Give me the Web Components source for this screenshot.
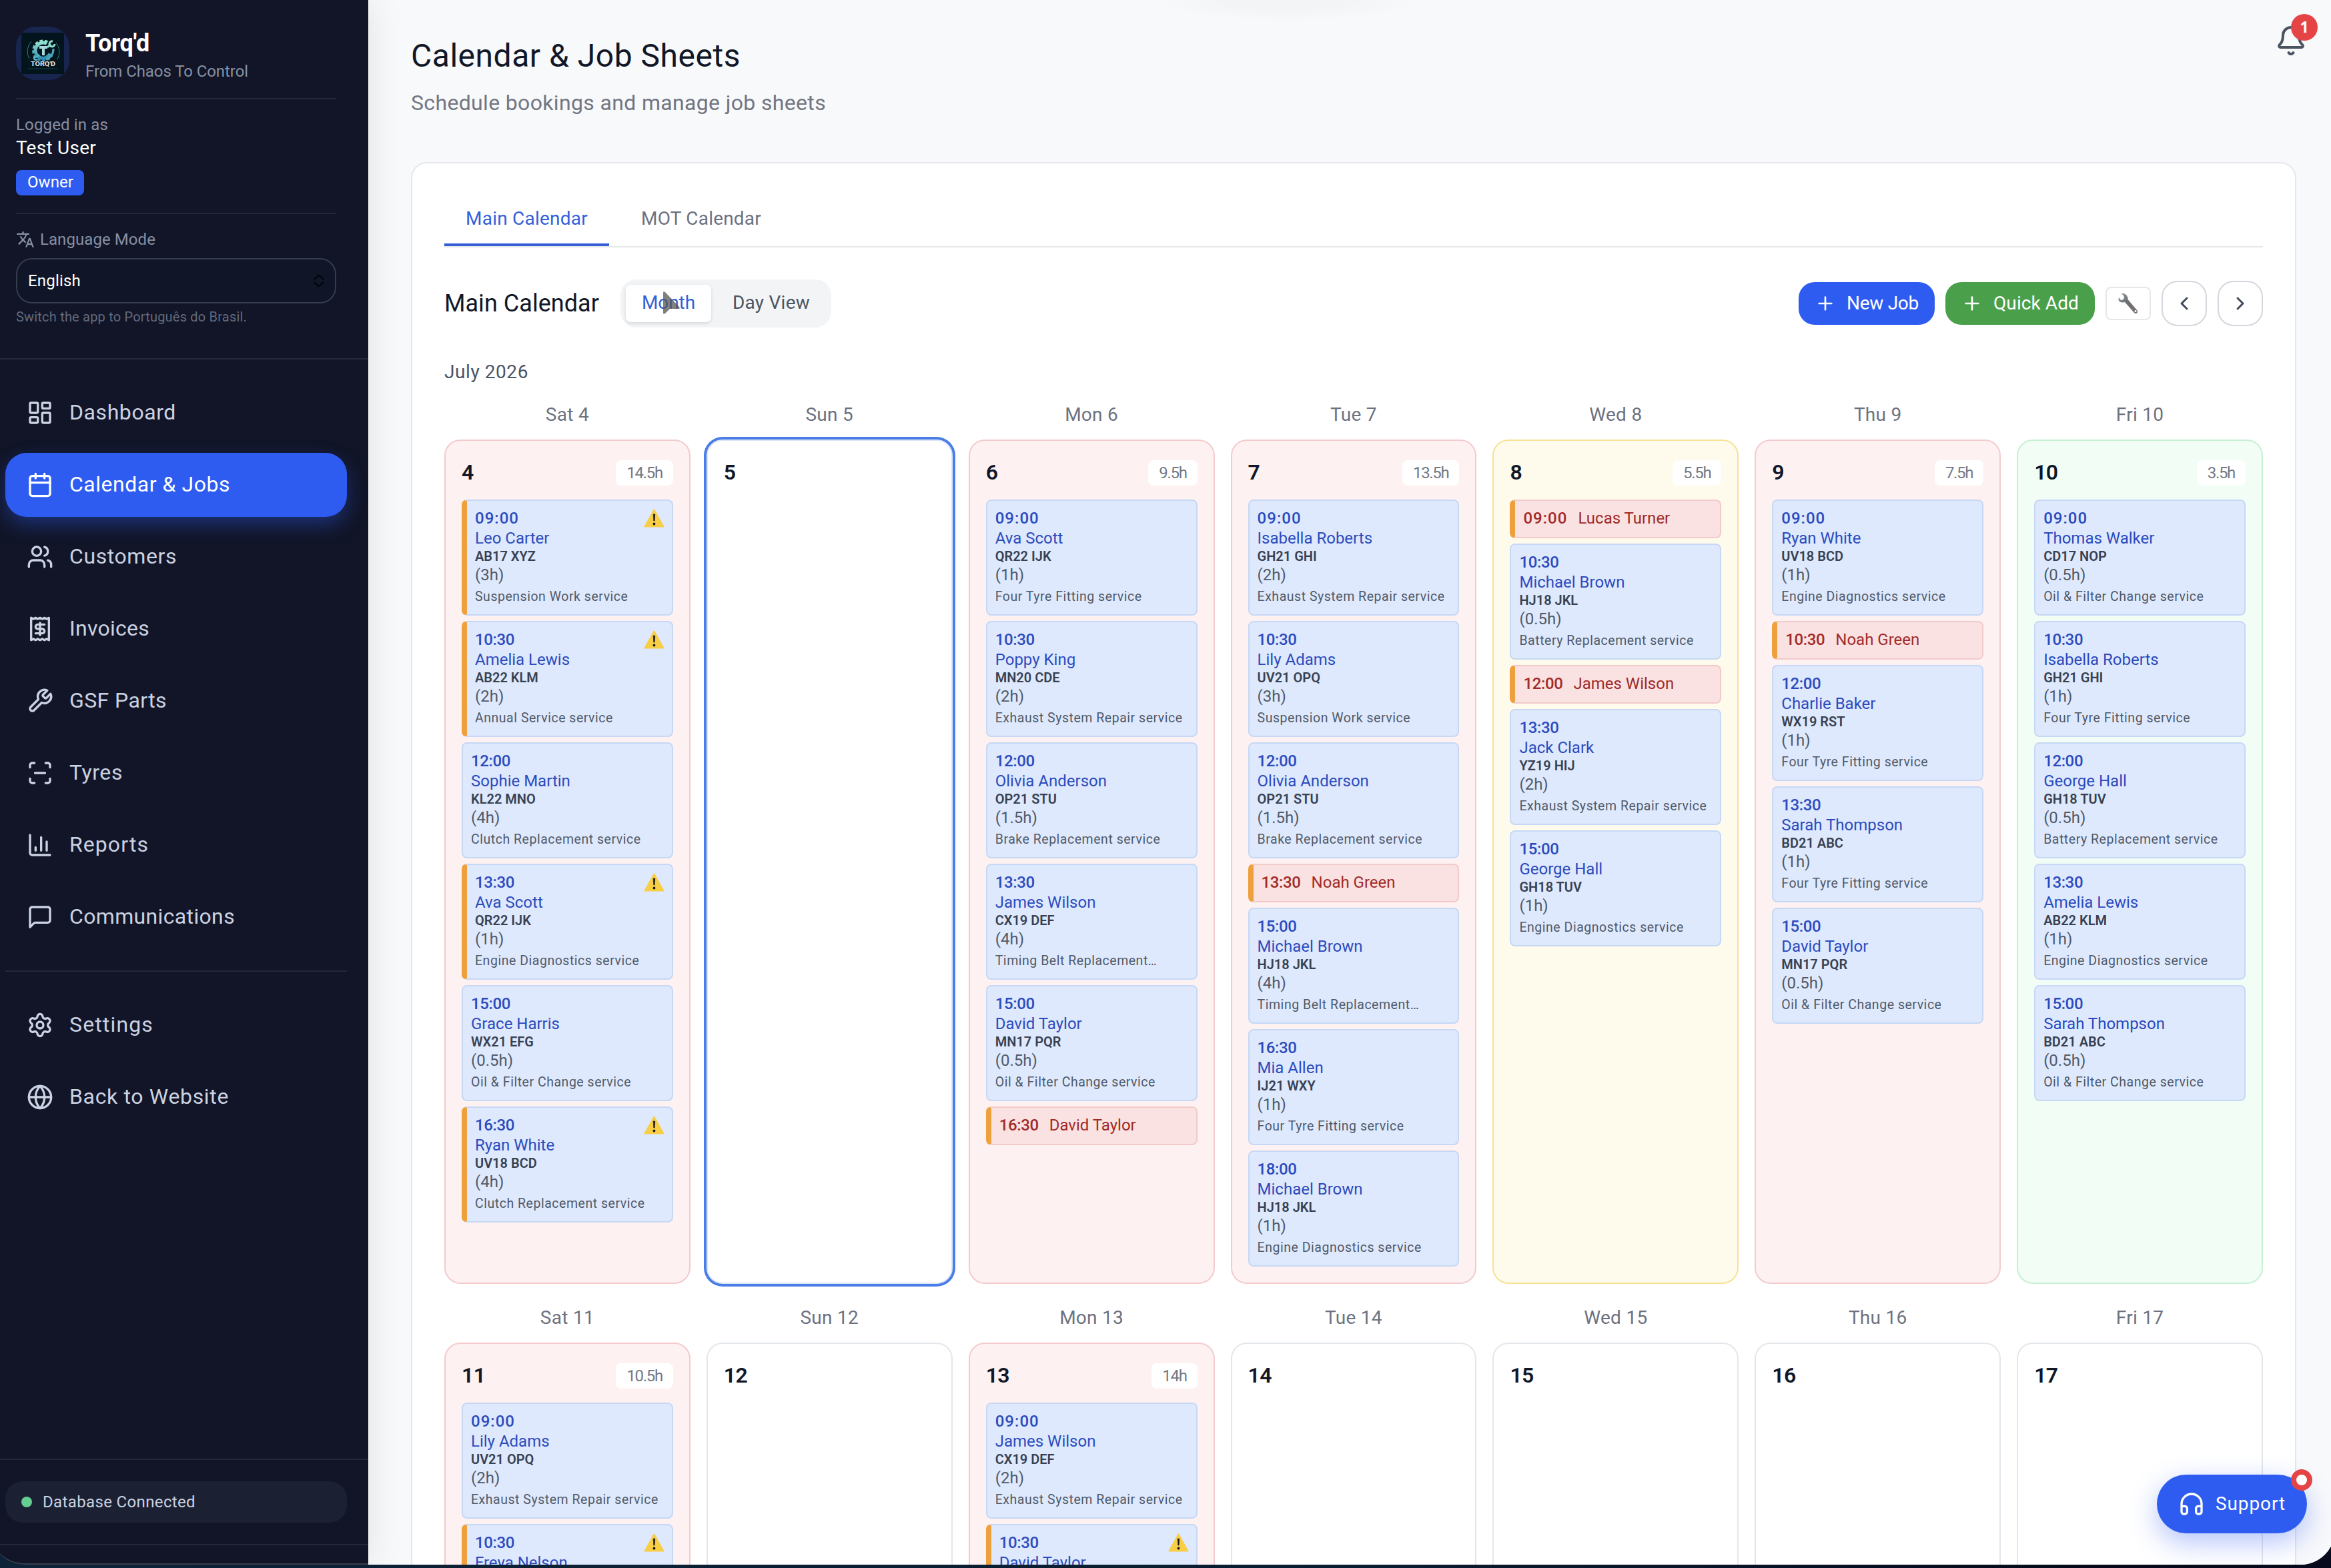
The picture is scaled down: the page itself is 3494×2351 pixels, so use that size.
<!DOCTYPE html>
<html lang="en">
<head>
<meta charset="utf-8">
<title>Torq'd - Calendar &amp; Job Sheets</title>
<style>
  html, body {
    margin: 0;
    height: 2351px;
    overflow: hidden;
    background: linear-gradient(90deg, #0c2338, #0a1c30 60%, #060a1c 90%);
    font-family: Roboto, "Liberation Sans", sans-serif;
    color: #111727;
  }
</style>
</head>
<body>
<app-window>
  <side-bar slot="side"></side-bar>
  <calendar-page></calendar-page>
</app-window>

<script>
const ICONS = {
  dashboard: '<rect width="7" height="9" x="3" y="3" rx="1"/><rect width="7" height="5" x="14" y="3" rx="1"/><rect width="7" height="9" x="14" y="12" rx="1"/><rect width="7" height="5" x="3" y="16" rx="1"/>',
  calendar: '<path d="M8 2v4M16 2v4"/><rect width="18" height="18" x="3" y="4" rx="2"/><path d="M3 10h18"/>',
  users: '<path d="M16 21v-2a4 4 0 0 0-4-4H6a4 4 0 0 0-4 4v2"/><circle cx="9" cy="7" r="4"/><path d="M22 21v-2a4 4 0 0 0-3-3.87M16 3.13a4 4 0 0 1 0 7.75"/>',
  receipt: '<path d="M4 2v20l2-1 2 1 2-1 2 1 2-1 2 1 2-1 2 1V2l-2 1-2-1-2 1-2-1-2 1-2-1-2 1Z"/><path d="M16 8h-6a2 2 0 1 0 0 4h4a2 2 0 1 1 0 4H8M12 17.5v-11"/>',
  wrench: '<path d="M14.7 6.3a1 1 0 0 0 0 1.4l1.6 1.6a1 1 0 0 0 1.4 0l3.77-3.77a6 6 0 0 1-7.94 7.94l-6.91 6.91a2.12 2.12 0 0 1-3-3l6.91-6.91a6 6 0 0 1 7.94-7.94l-3.76 3.76z"/>',
  scan: '<path d="M3 7V5a2 2 0 0 1 2-2h2M17 3h2a2 2 0 0 1 2 2v2M21 17v2a2 2 0 0 1-2 2h-2M7 21H5a2 2 0 0 1-2-2v-2M7.5 12h9"/>',
  chart: '<path d="M3 3v16a2 2 0 0 0 2 2h16M18 17V9M13 17V5M8 17v-3"/>',
  message: '<path d="M21 15a2 2 0 0 1-2 2H7l-4 4V5a2 2 0 0 1 2-2h14a2 2 0 0 1 2 2z"/>',
  settings: '<path d="M9.671 4.136a2.34 2.34 0 0 1 4.659 0 2.34 2.34 0 0 0 3.319 1.915 2.34 2.34 0 0 1 2.33 4.033 2.34 2.34 0 0 0 0 3.831 2.34 2.34 0 0 1-2.33 4.033 2.34 2.34 0 0 0-3.319 1.915 2.34 2.34 0 0 1-4.659 0 2.34 2.34 0 0 0-3.32-1.915 2.34 2.34 0 0 1-2.33-4.033 2.34 2.34 0 0 0 0-3.831A2.34 2.34 0 0 1 6.35 6.051a2.34 2.34 0 0 0 3.319-1.915"/><circle cx="12" cy="12" r="3"/>',
  globe: '<circle cx="12" cy="12" r="10"/><path d="M12 2a14.5 14.5 0 0 0 0 20 14.5 14.5 0 0 0 0-20M2 12h20"/>',
  plus: '<path d="M5 12h14M12 5v14"/>',
  left: '<path d="m15 18-6-6 6-6"/>',
  right: '<path d="m9 18 6-6-6-6"/>',
  updown: '<path d="m5 9 7-6 7 6M5 15l7 6 7-6"/>',
  bell: '<path d="M10.268 21a2 2 0 0 0 3.464 0M3.262 15.326A1 1 0 0 0 4 17h16a1 1 0 0 0 .74-1.673C19.41 13.956 18 12.499 18 8A6 6 0 0 0 6 8c0 4.499-1.411 5.956-2.738 7.326"/>',
  headphones: '<path d="M3 14h3a2 2 0 0 1 2 2v3a2 2 0 0 1-2 2H5a2 2 0 0 1-2-2v-7a9 9 0 0 1 18 0v7a2 2 0 0 1-2 2h-1a2 2 0 0 1-2-2v-3a2 2 0 0 1 2-2h3"/>',
  translate: '<path fill="currentColor" stroke="none" d="m12.87 15.07-2.54-2.51.03-.03A17.52 17.52 0 0 0 14.07 6H17V4h-7V2H8v2H1v2h11.17C11.5 7.92 10.44 9.75 9 11.35 8.07 10.32 7.3 9.19 6.69 8h-2c.73 1.63 1.73 3.17 2.98 4.56l-5.09 5.02L4 19l5-5 3.11 3.11.76-2.04zM18.5 10h-2L12 22h2l1.12-3h4.75L21 22h2l-4.5-12zm-2.62 7 1.62-4.33L19.12 17h-3.24z"/>'
};

class AppIcon extends HTMLElement {
  connectedCallback() {
    const size = this.getAttribute('size') || 40;
    this.attachShadow({mode: 'open'}).innerHTML = `
      <style>
        :host { display: block; flex: none; width: ${size}px; height: ${size}px; }
        svg { display: block; width: 100%; height: 100%; }
      </style>
      <svg viewBox="0 0 24 24" fill="none" stroke="currentColor" stroke-width="${this.getAttribute('stroke') || 2}"
        stroke-linecap="round" stroke-linejoin="round">${ICONS[this.getAttribute('name')]}</svg>
    `;
  }
}

// One line of text, tracked out or in until it is `width` pixels wide
class FitText extends HTMLElement {
  connectedCallback() {
    this.attachShadow({mode: 'open'}).innerHTML = `
      <style>
        :host { display: block; white-space: nowrap; }
        span { display: inline-block; letter-spacing: 0; }
      </style>
      <span><slot></slot></span>
    `;
    const span = this.shadowRoot.querySelector('span');
    const width = Number(this.getAttribute('width'));
    const extra = width - span.getBoundingClientRect().width;
    span.style.letterSpacing = `${extra / this.textContent.length}px`;
  }
}

class AppWindow extends HTMLElement {
  constructor() {
    super();
    this.attachShadow({mode: 'open'}).innerHTML = `
      <style>
        :host {
          display: flex;
          box-sizing: border-box;
          height: 2346px;
          margin: 0 -6px 0 -15px;
          padding: 0 6px 0 15px;
          overflow: hidden;
          border-radius: 0 0 52px 52px;
          background: linear-gradient(90deg, #111527 300px, #f8f9fb 600px);
        }
      </style>
      <slot name="side"></slot>
      <slot></slot>
    `;
  }
}

class NavItem extends HTMLElement {
  connectedCallback() {
    this.attachShadow({mode: 'open'}).innerHTML = `
      <style>
        :host {
          display: flex;
          align-items: center;
          gap: 24px;
          height: 96px;
          padding-left: 32px;
          border-radius: 32px;
          font-size: 32px;
          color: #cbd2e1;
        }
        :host([active]) {
          background: #2e5cf1;
          color: #fff;
          box-shadow: 0 12px 28px rgba(46, 92, 241, .38);
        }
        fit-text { margin-top: -3px; }
      </style>
      <app-icon name="${this.getAttribute('icon')}"></app-icon>
      <fit-text width="${this.getAttribute('width')}">${this.innerHTML}</fit-text>
    `;
  }
}

class SideBar extends HTMLElement {
  constructor() {
    super();
    this.attachShadow({mode: 'open'});
  }

  connectedCallback() {
    this.shadowRoot.innerHTML = `
      <style>
        :host {
          display: flex;
          flex-direction: column;
          flex: none;
          box-sizing: border-box;
          position: relative;
          z-index: 1;
          width: 567px;
          margin-left: -15px;
          padding-left: 15px;
          height: 2346px;
          background: #111527;
          border-bottom: 2px solid #3a4050;
          border-radius: 0 0 0 52px;
          box-shadow: 0 0 56px rgba(0, 0, 0, .1);
        }
        .top {
          height: 497px;
          padding: 40px 48px 0 24px;
          border-bottom: 2px solid #22273a;
        }
        .brand {
          display: flex;
          height: 107px;
          gap: 25px;
          border-bottom: 2px solid #22273a;
        }
        .logo {
          display: flex;
          align-items: center;
          justify-content: center;
          width: 80px;
          height: 80px;
          border-radius: 30px;
          background: #18254f;
        }
        .name { margin: 5px 0 0 -1px; font-size: 36px; line-height: 40px; font-weight: 700; color: #fff; }
        .muted { font-size: 24px; line-height: 32px; color: #8790a3; }
        .brand .muted { margin: 6px 0 0 -1px; }
        .user { height: 148px; padding-top: 22px; border-bottom: 2px solid #22273a; }
        .user .who { font-size: 28px; line-height: 38px; color: #fff; }
        .role {
          display: inline-block;
          margin-top: 14px;
          height: 38px;
          padding: 0 16px 0 17px;
          border-radius: 8px;
          background: #2e5cf1;
          color: #fff;
          font-size: 24px;
          line-height: 37px;
        }
        .lang { display: flex; align-items: center; gap: 8px; margin-top: 22px; }
        .select {
          display: flex;
          align-items: center;
          justify-content: space-between;
          box-sizing: border-box;
          height: 68px;
          margin-top: 12px;
          padding: 0 13px 0 16px;
          border: 2px solid #353c4c;
          border-radius: 24px;
          background: #101628;
          color: #fff;
          font-size: 24px;
        }
        .select app-icon { color: #04060c; }
        .hint { margin-top: 5px; font-size: 20px; line-height: 30px; color: #626a7d; }
        nav {
          display: flex;
          flex-direction: column;
          gap: 12px;
          padding: 32px 32px 0 8px;
        }
        hr { width: 100%; height: 2px; margin: 20px 0; border: 0; background: #22273a; }
        .status {
          box-sizing: border-box;
          height: 130px;
          margin: auto 0 27px;
          padding: 32px 32px 0 8px;
          border: solid #22273a;
          border-width: 2px 0;
        }
        .status div {
          display: flex;
          align-items: center;
          gap: 16px;
          height: 62px;
          padding-left: 24px;
          border-radius: 26px;
          background: #1b2032;
          color: #cbd2e1;
          font-size: 24px;
        }
        i { width: 16px; height: 16px; border-radius: 50%; background: #63cd92; }
      </style>
      <div class="top">
        <div class="brand">
          <div class="logo">
            <svg width="64" height="62" viewBox="0 0 64 62">
              <defs><linearGradient id="g" x1="0" y1="0" x2="0" y2="1"><stop offset="0" stop-color="#8fe0cf"/><stop offset="1" stop-color="#2f8fb0"/></linearGradient></defs>
              <rect width="64" height="62" fill="#03141c"/>
              <path d="M15 13a22 22 0 0 0-3 26M52 15a22 22 0 0 1 2 25" fill="none" stroke="#2d7f86" stroke-width="1"/>
              <path d="M39 14.500a14 14 0 1 0 6 19" fill="none" stroke="url(#g)" stroke-width="5" stroke-dasharray="4.500 2.500"/>
              <path d="M38 16.500a11.500 11.500 0 1 0 5 15" fill="none" stroke="url(#g)" stroke-width="5"/>
              <path d="M48 24a16 16 0 0 1-11 16" fill="none" stroke="#4aa6bd" stroke-width="3"/>
              <path d="M39 22l5-5M47 13a4 4 0 1 0 3 4" fill="none" stroke="#8fe0cf" stroke-width="3"/>
              <path d="M27 33l-5 4M21 35a3 3 0 1 0 3 5" fill="none" stroke="#5cb4c4" stroke-width="2.500"/>
              <path d="M27 22h12M33 22v12" stroke="#a5d9de" stroke-width="4"/>
              <text x="32.500" y="50" text-anchor="middle" font-size="9" font-weight="700" fill="#e6eef0" textLength="37" lengthAdjust="spacingAndGlyphs">TORQ'D</text>
              <path d="M10 54h43" stroke="#23505a" stroke-dasharray="2 1"/>
            </svg>
          </div>
          <div>
            <fit-text class="name" width="96">Torq'd</fit-text>
            <fit-text class="muted" width="244">From Chaos To Control</fit-text>
          </div>
        </div>
        <div class="user">
          <fit-text class="muted" width="138">Logged in as</fit-text>
          <fit-text class="who" width="120">Test User</fit-text>
          <fit-text class="role" width="69">Owner</fit-text>
        </div>
        <div class="lang muted">
          <app-icon name="translate" size="28"></app-icon>
          <fit-text width="173">Language Mode</fit-text>
        </div>
        <div class="select"><fit-text width="79">English</fit-text><app-icon name="updown" size="22" stroke="2.800"></app-icon></div>
        <fit-text class="hint" width="346">Switch the app to Português do Brasil.</fit-text>
      </div>
      <nav>
        <nav-item icon="dashboard" width="160">Dashboard</nav-item>
        <nav-item icon="calendar" width="241" active>Calendar &amp; Jobs</nav-item>
        <nav-item icon="users" width="161">Customers</nav-item>
        <nav-item icon="receipt" width="120">Invoices</nav-item>
        <nav-item icon="wrench" width="146">GSF Parts</nav-item>
        <nav-item icon="scan" width="80">Tyres</nav-item>
        <nav-item icon="chart" width="119">Reports</nav-item>
        <nav-item icon="message" width="248">Communications</nav-item>
        <hr>
        <nav-item icon="settings" width="126">Settings</nav-item>
        <nav-item icon="globe" width="239">Back to Website</nav-item>
      </nav>
      <div class="status"><div><i></i><fit-text width="229">Database Connected</fit-text></div></div>
    `;
  }
}

class JobCard extends HTMLElement {
  set job(job) {
    const [time, name, plate, hours, service, late] = job;
    this.attachShadow({mode: 'open'}).innerHTML = `
      <style>
        :host {
          display: block;
          flex: none;
          box-sizing: border-box;
          position: relative;
          height: 174px;
          padding: 11px 12px 0;
          border: 2px solid #c6d8f5;
          border-radius: 8px;
          background: #dfe9fd;
          color: #2b4bbd;
          font-size: 24px;
          line-height: 30px;
          white-space: nowrap;
        }
        :host(.late) { border-left: 8px solid #eea03c; }
        :host(.short) {
          display: flex;
          gap: 16px;
          height: 58px;
          border-color: #f3caca;
          border-left: 8px solid #eea03c;
          background: #fae2e2;
          color: #a12a28;
        }
        .time { font-weight: 500; }
        .plate { font-size: 20px; line-height: 25px; font-weight: 600; color: #374151; }
        .hours { line-height: 31px; color: #4f5a69; }
        .service { margin-top: 4px; font-size: 19.500px; line-height: 25px; letter-spacing: .027em; color: #4f5a69; }
        svg { position: absolute; top: 12px; right: 11px; }
      </style>
      <fit-text class="time" width="${time[0] === '0' ? 66 : 59}">${time}</fit-text>
      <div>${name}</div>
      ${plate ? `
        <div class="plate">${plate}</div>
        <div class="hours">(${hours})</div>
        <div class="service">${service}</div>` : ''}
      ${late ? `
        <svg width="31" height="28" viewBox="0 0 31 28">
          <path d="M15.500 1.500 29.500 26.500h-28z" fill="#f7ce46" stroke="#f7ce46" stroke-width="2" stroke-linejoin="round"/>
          <path d="M14.200 8h2.600l-.6 10h-1.400z" fill="#1d1a14" stroke="#1d1a14" stroke-width=".6"/>
          <circle cx="15.500" cy="22.500" r="1.900" fill="#1d1a14"/>
        </svg>` : ''}
    `;
    this.className = plate ? (late ? 'late' : '') : 'short';
  }
}

class DayCell extends HTMLElement {
  set day({num, total, tone, jobs = []}) {
    this.className = tone || '';
    this.attachShadow({mode: 'open'}).innerHTML = `
      <style>
        :host {
          display: flex;
          flex-direction: column;
          gap: 8px;
          box-sizing: border-box;
          min-width: 0;
          padding: 24px;
          border: 2px solid #e3e6eb;
          border-radius: 24px;
          background: #fff;
        }
        :host(.red) { background: #fdf1f1; border-color: #f4cbcd; }
        :host(.yellow) { background: #fefbec; border-color: #f6e293; }
        :host(.green) { background: #f2fdf6; border-color: #c6f0d3; }
        :host(.today) { border-color: #dce5f8; box-shadow: 0 0 0 4px #4a7ee6; }
        header {
          display: flex;
          align-items: center;
          justify-content: space-between;
          height: 48px;
          margin-bottom: 8px;
        }
        b { font-size: 32px; line-height: 44px; margin-top: -3px; font-weight: 600; letter-spacing: -.02em; color: #111727; }
        span {
          padding: 0 16px;
          border-radius: 8px;
          background: #fff;
          font-size: 24px;
          line-height: 38px;
          letter-spacing: -.055em;
          color: #737985;
        }
      </style>
      <header><b>${num}</b>${total ? `<span>${total}</span>` : ''}</header>
    `;
    jobs.forEach(job => {
      const card = document.createElement('job-card');
      card.job = job;
      this.shadowRoot.append(card);
    });
  }
}

class CalendarWeek extends HTMLElement {
  set days(days) {
    this.attachShadow({mode: 'open'}).innerHTML = `
      <style>
        :host {
          display: grid;
          grid-template-columns: repeat(7, minmax(0, 1fr));
          grid-template-rows: 40px 1266px;
          column-gap: 24px;
          row-gap: 18px;
          margin-bottom: 30px;
        }
        .label { text-align: center; font-size: 28px; line-height: 42px; letter-spacing: .01em; color: #6c7280; }
      </style>
      ${days.map(day => `<div class="label">${day.label} ${day.num}</div>`).join('')}
    `;
    days.forEach(day => {
      const cell = document.createElement('day-cell');
      cell.day = day;
      this.shadowRoot.append(cell);
    });
  }
}

const S = {
  exhaust: 'Exhaust System Repair service',
  tyre: 'Four Tyre Fitting service',
  brake: 'Brake Replacement service',
  belt: 'Timing Belt Replacement…',
  oil: 'Oil &amp; Filter Change service',
  engine: 'Engine Diagnostics service',
  battery: 'Battery Replacement service',
  clutch: 'Clutch Replacement service',
  suspension: 'Suspension Work service',
  annual: 'Annual Service service'
};

const WEEKS = [
  [
    {label: 'Sat', num: 4, total: '14.5h', tone: 'red', jobs: [
      ['09:00', 'Leo Carter', 'AB17 XYZ', '3h', S.suspension, true],
      ['10:30', 'Amelia Lewis', 'AB22 KLM', '2h', S.annual, true],
      ['12:00', 'Sophie Martin', 'KL22 MNO', '4h', S.clutch],
      ['13:30', 'Ava Scott', 'QR22 IJK', '1h', S.engine, true],
      ['15:00', 'Grace Harris', 'WX21 EFG', '0.5h', S.oil],
      ['16:30', 'Ryan White', 'UV18 BCD', '4h', S.clutch, true]
    ]},
    {label: 'Sun', num: 5, tone: 'today'},
    {label: 'Mon', num: 6, total: '9.5h', tone: 'red', jobs: [
      ['09:00', 'Ava Scott', 'QR22 IJK', '1h', S.tyre],
      ['10:30', 'Poppy King', 'MN20 CDE', '2h', S.exhaust],
      ['12:00', 'Olivia Anderson', 'OP21 STU', '1.5h', S.brake],
      ['13:30', 'James Wilson', 'CX19 DEF', '4h', S.belt],
      ['15:00', 'David Taylor', 'MN17 PQR', '0.5h', S.oil],
      ['16:30', 'David Taylor']
    ]},
    {label: 'Tue', num: 7, total: '13.5h', tone: 'red', jobs: [
      ['09:00', 'Isabella Roberts', 'GH21 GHI', '2h', S.exhaust],
      ['10:30', 'Lily Adams', 'UV21 OPQ', '3h', S.suspension],
      ['12:00', 'Olivia Anderson', 'OP21 STU', '1.5h', S.brake],
      ['13:30', 'Noah Green'],
      ['15:00', 'Michael Brown', 'HJ18 JKL', '4h', S.belt],
      ['16:30', 'Mia Allen', 'IJ21 WXY', '1h', S.tyre],
      ['18:00', 'Michael Brown', 'HJ18 JKL', '1h', S.engine]
    ]},
    {label: 'Wed', num: 8, total: '5.5h', tone: 'yellow', jobs: [
      ['09:00', 'Lucas Turner'],
      ['10:30', 'Michael Brown', 'HJ18 JKL', '0.5h', S.battery],
      ['12:00', 'James Wilson'],
      ['13:30', 'Jack Clark', 'YZ19 HIJ', '2h', S.exhaust],
      ['15:00', 'George Hall', 'GH18 TUV', '1h', S.engine]
    ]},
    {label: 'Thu', num: 9, total: '7.5h', tone: 'red', jobs: [
      ['09:00', 'Ryan White', 'UV18 BCD', '1h', S.engine],
      ['10:30', 'Noah Green'],
      ['12:00', 'Charlie Baker', 'WX19 RST', '1h', S.tyre],
      ['13:30', 'Sarah Thompson', 'BD21 ABC', '1h', S.tyre],
      ['15:00', 'David Taylor', 'MN17 PQR', '0.5h', S.oil]
    ]},
    {label: 'Fri', num: 10, total: '3.5h', tone: 'green', jobs: [
      ['09:00', 'Thomas Walker', 'CD17 NOP', '0.5h', S.oil],
      ['10:30', 'Isabella Roberts', 'GH21 GHI', '1h', S.tyre],
      ['12:00', 'George Hall', 'GH18 TUV', '0.5h', S.battery],
      ['13:30', 'Amelia Lewis', 'AB22 KLM', '1h', S.engine],
      ['15:00', 'Sarah Thompson', 'BD21 ABC', '0.5h', S.oil]
    ]}
  ],
  [
    {label: 'Sat', num: 11, total: '10.5h', tone: 'red', jobs: [
      ['09:00', 'Lily Adams', 'UV21 OPQ', '2h', S.exhaust],
      ['10:30', 'Freya Nelson', ' ', '', '', true]
    ]},
    {label: 'Sun', num: 12},
    {label: 'Mon', num: 13, total: '14h', tone: 'red', jobs: [
      ['09:00', 'James Wilson', 'CX19 DEF', '2h', S.exhaust],
      ['10:30', 'David Taylor', ' ', '', '', true]
    ]},
    {label: 'Tue', num: 14},
    {label: 'Wed', num: 15},
    {label: 'Thu', num: 16},
    {label: 'Fri', num: 17}
  ]
];

class CalendarPage extends HTMLElement {
  constructor() {
    super();
    this.attachShadow({mode: 'open'});
  }

  connectedCallback() {
    this.shadowRoot.innerHTML = `
      <style>
        :host {
          display: block;
          position: relative;
          flex: 1;
          min-width: 0;
          height: 2346px;
          overflow: hidden;
          box-sizing: border-box;
          padding: 51px 52px 0 64px;
          background: radial-gradient(ellipse 200px 32px at 1378px 0, #f3f4f6 40%, #f8f9fb) #f8f9fb;
        }
        .title { font-size: 48px; line-height: 65px; }
        .sub { margin: 14px 0 65px; font-size: 32px; line-height: 48px; color: #717682; }
        .card {
          box-sizing: border-box;
          height: 3000px;
          padding: 49px 48px;
          border: 2px solid #e5e7eb;
          border-radius: 24px;
          background: #fff;
        }
        .tabs { display: flex; gap: 16px; border-bottom: 2px solid #e5e7eb; }
        .tab { height: 71px; padding: 0 32px; border-bottom: 4px solid transparent; font-size: 28px; line-height: 67px; color: #6c7280; }
        .tab.on { color: #345fd9; border-color: #345fd9; }
        .bar { display: flex; align-items: center; gap: 16px; height: 72px; margin-top: 48px; font-size: 28px; }
        .bar h2 { margin: 0 16px 0 0; font-size: 36px; font-weight: 400; line-height: 48px; }
        .toggle { display: flex; gap: 8px; height: 56px; padding: 8px; border-radius: 24px; background: #f3f4f6; margin-right: auto; }
        .toggle div { position: relative; padding: 0 24px; line-height: 54px; color: #4b5563; }
        .toggle .on { border-radius: 8px; background: #fff; color: #345fd9; box-shadow: 0 2px 5px rgba(0, 0, 0, .12); }
        .cursor { position: absolute; left: 55px; top: 9px; }
        .btn { display: flex; align-items: center; gap: 16px; height: 64px; padding: 0 24px; border-radius: 24px; line-height: 62px; color: #fff; background: #2e5cf1; }
        .btn.green { background: #4aa04a; }
        .sq { display: flex; align-items: center; justify-content: center; box-sizing: border-box; width: 68px; height: 68px; border: 2px solid #d4d7dd; border-radius: 24px; color: #414a58; }
        .sq.tool { height: 50px; border-color: #e5e7eb; border-radius: 8px; }
        .month { margin: 47px 0 23px; font-size: 28px; line-height: 40px; color: #4b5563; }
        .bell { position: absolute; top: 37px; right: 36px; color: #4b5361; }
        .count {
          position: absolute;
          top: 21px;
          right: 20px;
          width: 40px;
          height: 40px;
          border-radius: 50%;
          background: #e54446;
          color: #fff;
          font: 700 23px/38px "Noto Sans", sans-serif;
          text-align: center;
        }
        .support {
          position: absolute;
          top: 2211px;
          right: 36px;
          display: flex;
          align-items: center;
          gap: 16px;
          width: 225px;
          height: 88px;
          padding-left: 32px;
          box-sizing: border-box;
          border-radius: 44px;
          background: #2e5cf1;
          color: #fff;
          font-size: 28px;
          box-shadow: 0 14px 40px rgba(46, 92, 241, .36);
        }
        .support fit-text { margin-top: -2px; }
        .dot { position: absolute; top: -8px; right: -8px; width: 16px; height: 16px; border: 8px solid #e54446; border-radius: 50%; background: #fff; }
      </style>
      <fit-text class="title" width="494">Calendar &amp; Job Sheets</fit-text>
      <fit-text class="sub" width="622">Schedule bookings and manage job sheets</fit-text>
      <div class="card">
        <div class="tabs">
          <div class="tab on"><fit-text width="183">Main Calendar</fit-text></div>
          <div class="tab"><fit-text width="180">MOT Calendar</fit-text></div>
        </div>
        <div class="bar">
          <h2><fit-text width="232">Main Calendar</fit-text></h2>
          <div class="toggle">
            <div class="on">
              <fit-text width="80">Month</fit-text>
              <svg class="cursor" width="28" height="36" viewBox="0 0 28 36"><path d="M1 3q0-3 3-1l21 22q2 3-1 3H11l-7 7q-3 2-3-1z" fill="#555" fill-opacity=".75"/></svg>
            </div>
            <div><fit-text width="116">Day View</fit-text></div>
          </div>
          <div class="btn"><app-icon name="plus" size="32"></app-icon><fit-text width="108">New Job</fit-text></div>
          <div class="btn green"><app-icon name="plus" size="32"></app-icon><fit-text width="128">Quick Add</fit-text></div>
          <div class="sq tool">
            <svg width="32" height="32" viewBox="0 0 32 32">
              <defs><linearGradient id="w" x1="0" y1="0" x2="1" y2="1"><stop offset="0" stop-color="#a4adb4"/><stop offset=".4" stop-color="#6c6f75"/><stop offset="1" stop-color="#7d6f70"/></linearGradient></defs>
              <path d="M6 1l4 5-1 4-4 1-3-4C0 11 3 15 8 14.500l3-.5 14 16c2 2 6 1 5-3L15.500 10c.5-5-4-10-9.500-9z" fill="url(#w)"/>
              <circle cx="27" cy="27.500" r="1.500" fill="#fff"/>
            </svg>
          </div>
          <div class="sq"><app-icon name="left" size="32" stroke="2.200"></app-icon></div>
          <div class="sq"><app-icon name="right" size="32" stroke="2.200"></app-icon></div>
        </div>
        <fit-text class="month" width="126">July 2026</fit-text>
      </div>
      <app-icon class="bell" name="bell" size="48"></app-icon>
      <div class="count">1</div>
      <div class="support">
        <app-icon name="headphones"></app-icon>
        <fit-text width="105">Support</fit-text>
        <div class="dot"></div>
      </div>
    `;
    const card = this.shadowRoot.querySelector('.card');
    WEEKS.forEach(days => {
      const week = document.createElement('calendar-week');
      week.days = days;
      card.append(week);
    });
  }
}

customElements.define('app-icon', AppIcon);
customElements.define('fit-text', FitText);
customElements.define('nav-item', NavItem);
customElements.define('job-card', JobCard);
customElements.define('day-cell', DayCell);
customElements.define('calendar-week', CalendarWeek);
customElements.define('side-bar', SideBar);
customElements.define('calendar-page', CalendarPage);
customElements.define('app-window', AppWindow);
</script>
</body>
</html>
